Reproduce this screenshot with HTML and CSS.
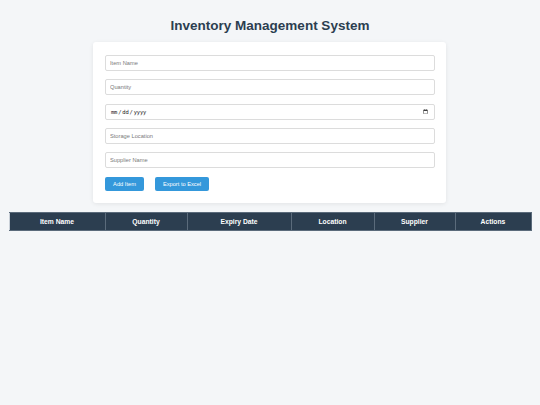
FILE: index.html
```html
<!DOCTYPE html>
<html lang="en">
<head>
<meta charset="utf-8">
<title>Inventory Management System</title>
<link rel="stylesheet" href="styles.css">
</head>
<body>
<h1 class="title">Inventory Management System</h1>
<div class="card">
  <form class="form">
    <input class="field" type="text" placeholder="Item Name">
    <input class="field" type="number" placeholder="Quantity">
    <input class="field date" type="date">
    <input class="field" type="text" placeholder="Storage Location">
    <input class="field" type="text" placeholder="Supplier Name">
    <div class="actions">
      <button class="btn add" type="button">Add Item</button>
      <button class="btn export" type="button">Export to Excel</button>
    </div>
  </form>
</div>
<table class="table">
  <thead>
    <tr>
      <th class="c1">Item Name</th>
      <th class="c2">Quantity</th>
      <th class="c3">Expiry Date</th>
      <th class="c4">Location</th>
      <th class="c5">Supplier</th>
      <th class="c6">Actions</th>
    </tr>
  </thead>
  <tbody></tbody>
</table>
</body>
</html>
```
FILE: styles.css
```css
html, body {
  margin: 0;
  padding: 0;
}
body {
  background: #f4f6f8;
  font-family: "Liberation Sans", Arial, sans-serif;
  padding: 8px 8.5px;
}
.title {
  margin: 9px 0 0;
  height: 25px;
  line-height: 17px;
  text-align: center;
  font-size: 13.5px;
  font-weight: bold;
  color: #2c3e50;
}
.card {
  width: 329px;
  margin-left: 84.5px;
  background: #fff;
  border-radius: 3px;
  box-shadow: 0 1px 4px rgba(0, 0, 0, 0.08);
  padding: 13px 12px 12px 12px;
}
.form {
  display: flex;
  flex-direction: column;
  margin: 0;
}
.field {
  box-sizing: border-box;
  width: 330px;
  height: 16px;
  margin: 0 0 8.25px;
  padding: 0 4px;
  border: 1px solid #dcdcdc;
  border-radius: 2px;
  font-family: "Liberation Sans", Arial, sans-serif;
  font-size: 5.7px;
  color: #333;
  background: #fff;
  outline: none;
}
.field::placeholder {
  color: #7a7a7a;
}
.field.date {
  font-family: "DejaVu Sans Mono", monospace;
  font-size: 5.5px;
  letter-spacing: -0.2px;
  color: #222;
}
.actions {
  display: flex;
  gap: 11px;
  margin-top: 0.5px;
}
.btn {
  height: 14px;
  padding: 0;
  border: none;
  border-radius: 2px;
  background: #3498db;
  color: #fff;
  font-family: "Liberation Sans", Arial, sans-serif;
  font-size: 5.7px;
}
.btn.add {
  width: 39px;
}
.btn.export {
  width: 54px;
}
.table {
  width: 523px;
  margin-top: 9px;
  border-collapse: collapse;
  table-layout: fixed;
}
.table th {
  box-sizing: border-box;
  height: 18px;
  padding: 0;
  background: #2c3e50;
  color: #fff;
  font-size: 6.75px;
  font-weight: bold;
  text-align: center;
  border: 1px solid #5b6b7b;
}
.table th.c1 { width: 96px; border-left-color: #c9d0d8; }
.table th.c2 { width: 82px; }
.table th.c3 { width: 104px; }
.table th.c4 { width: 83px; }
.table th.c5 { width: 81px; }
```
